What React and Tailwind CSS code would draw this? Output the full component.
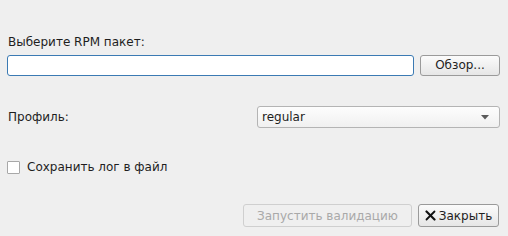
export default function App() {
  return (
    <div
      className="w-[508px] h-[236px] bg-[#efefef] pl-[7px] pr-[8px] pt-[35px] text-[12px] text-[#1e1e1e] flex flex-col"
      style={{ fontFamily: '"DejaVu Sans", sans-serif' }}
    >
      {/* rpm file */}
      <div className="leading-[14px] pl-[1px]">Выберите RPM пакет:</div>
      <div className="mt-[6px] flex gap-[6px] h-[21px]">
        <input
          className="flex-1 h-[21px] bg-white border border-[#3b7ab3] rounded-[3px] outline-none px-1"
          defaultValue=""
        />
        <button className="w-[80px] h-[21px] border border-[#9a9a9a] rounded-[3px] bg-gradient-to-b from-[#fbfbfb] to-[#e6e6e6] leading-[19px] text-center">
          Обзор...
        </button>
      </div>

      {/* profile */}
      <div className="mt-[30px] flex items-center h-[22px]">
        <div className="w-[250px] pl-[1px]">Профиль:</div>
        <div className="w-[243px] h-[22px] border border-[#b4b4b4] rounded-[3px] bg-gradient-to-b from-[#fdfdfd] to-[#f0f0f0] flex items-center pl-[4px] pr-[10px]">
          <span className="flex-1">regular</span>
          <svg width="8" height="5" viewBox="0 0 8 5">
            <path d="M0 0 H8 L4 4.5 Z" fill="#5a5a5a" />
          </svg>
        </div>
      </div>

      {/* log checkbox */}
      <div className="mt-[32px] flex items-center h-[14px]">
        <div className="w-[13px] h-[13px] border border-[#a8a8a8] bg-white rounded-[1px]" />
        <span className="ml-[7px]">Сохранить лог в файл</span>
      </div>

      {/* actions */}
      <div className="mt-[30px] flex justify-end gap-[6px] pr-[1px]">
        <button className="w-[169px] h-[23px] border border-[#cfcfcf] rounded-[3px] bg-[#efefef] text-[#a9a9a9] text-center">
          Запустить валидацию
        </button>
        <button className="w-[81px] h-[23px] border border-[#9a9a9a] rounded-[3px] bg-gradient-to-b from-[#fbfbfb] to-[#e6e6e6] flex items-center justify-center gap-[3px]">
          <svg width="11" height="11" viewBox="0 0 11 11">
            <path d="M1.5 1.5 L9.5 9.5" stroke="#111" strokeWidth="2.2" strokeLinecap="round" />
            <path d="M9.5 1.5 L1.5 9.5" stroke="#111" strokeWidth="1.8" strokeLinecap="round" />
          </svg>
          <span>Закрыть</span>
        </button>
      </div>
    </div>
  );
}
